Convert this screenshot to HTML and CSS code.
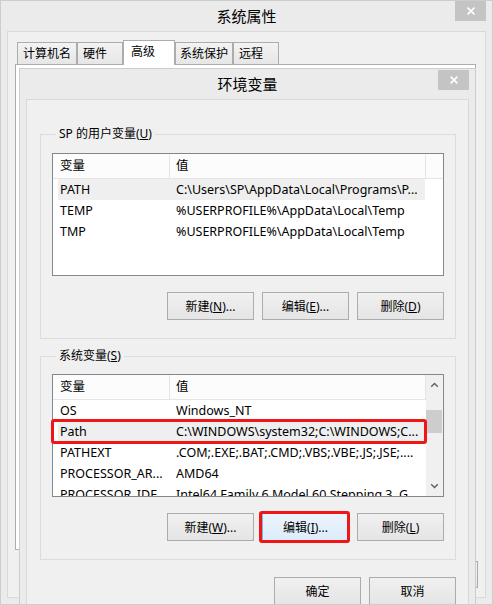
FILE: index.html
```html
<!DOCTYPE html>
<html lang="zh-CN">
<head>
<meta charset="utf-8">
<title>系统属性</title>
<link rel="stylesheet" href="styles.css">
</head>
<body>
<div class="win">
  <div class="titlebar">
    <div class="title">系统属性</div>
    <div class="close close-win">
      <svg width="8" height="8" viewBox="0 0 8 8"><path d="M0.6 0.6L7.4 7.4M7.4 0.6L0.6 7.4" stroke="#fff" stroke-width="1.6" fill="none"/></svg>
    </div>
  </div>
  <div class="win-client">
    <div class="tabs">
      <div class="tab">计算机名</div>
      <div class="tab">硬件</div>
      <div class="tab tab-sel">高级</div>
      <div class="tab tab-narrow">系统保护</div>
      <div class="tab">远程</div>
    </div>
    <div class="panel"></div>
    <div class="win-buttons">
      <button class="btn btn-short">确定</button>
      <button class="btn btn-short">取消</button>
      <button class="btn btn-short">应用(<u>A</u>)</button>
    </div>
  </div>

  <div class="env">
    <div class="titlebar">
      <div class="title">环境变量</div>
      <div class="close close-env">
        <svg width="8" height="8" viewBox="0 0 8 8"><path d="M0.6 0.6L7.4 7.4M7.4 0.6L0.6 7.4" stroke="#fff" stroke-width="1.6" fill="none"/></svg>
      </div>
    </div>
    <div class="env-client">
      <div class="group">
        <div class="legend">SP 的用户变量(<u>U</u>)</div>
        <div class="list list-user">
          <div class="list-head">
            <div class="h-name">变量</div>
            <div class="h-val">值</div>
          </div>
          <div class="rows">
            <div class="row row-sel"><div class="r-name">PATH</div><div class="r-val">C:\Users\SP\AppData\Local\Programs\P...</div></div>
            <div class="row"><div class="r-name">TEMP</div><div class="r-val">%USERPROFILE%\AppData\Local\Temp</div></div>
            <div class="row"><div class="r-name">TMP</div><div class="r-val">%USERPROFILE%\AppData\Local\Temp</div></div>
          </div>
        </div>
        <div class="btn-row">
          <button class="btn">新建(<u>N</u>)...</button>
          <button class="btn">编辑(<u>E</u>)...</button>
          <button class="btn">删除(<u>D</u>)</button>
        </div>
      </div>

      <div class="group group-sys">
        <div class="legend">系统变量(<u>S</u>)</div>
        <div class="list list-sys">
          <div class="list-main">
            <div class="list-head">
              <div class="h-name">变量</div>
              <div class="h-val">值</div>
            </div>
            <div class="rows">
              <div class="row"><div class="r-name">OS</div><div class="r-val">Windows_NT</div></div>
              <div class="row row-sel row-marked"><div class="r-name">Path</div><div class="r-val">C:\WINDOWS\system32;C:\WINDOWS;C...</div></div>
              <div class="row"><div class="r-name">PATHEXT</div><div class="r-val">.COM;.EXE;.BAT;.CMD;.VBS;.VBE;.JS;.JSE;....</div></div>
              <div class="row"><div class="r-name">PROCESSOR_AR...</div><div class="r-val">AMD64</div></div>
              <div class="row"><div class="r-name">PROCESSOR_IDE...</div><div class="r-val">Intel64 Family 6 Model 60 Stepping 3, G...</div></div>
            </div>
          </div>
          <div class="sb">
            <div class="sb-btn sb-up">
              <svg width="9" height="6" viewBox="0 0 9 6"><path d="M1.2 4.8L4.5 1.5L7.8 4.8" stroke="#606060" stroke-width="1.4" fill="none"/></svg>
            </div>
            <div class="sb-track"><div class="sb-thumb"></div></div>
            <div class="sb-btn sb-down">
              <svg width="9" height="6" viewBox="0 0 9 6"><path d="M1.2 1.2L4.5 4.5L7.8 1.2" stroke="#606060" stroke-width="1.4" fill="none"/></svg>
            </div>
          </div>
        </div>
        <div class="btn-row">
          <button class="btn">新建(<u>W</u>)...</button>
          <button class="btn btn-focus btn-marked">编辑(<u>I</u>)...</button>
          <button class="btn">删除(<u>L</u>)</button>
        </div>
      </div>

      <div class="env-buttons">
        <button class="btn">确定</button>
        <button class="btn">取消</button>
      </div>
    </div>
  </div>
</div>
</body>
</html>
```
FILE: styles.css
```css
* { box-sizing: border-box; }
html, body { margin: 0; padding: 0; }
body {
  width: 493px;
  height: 605px;
  overflow: hidden;
  font-family: "Noto Sans", "Noto Sans CJK SC", sans-serif;
  font-size: 12px;
  color: #000;
  background: #ebebeb;
}

.win {
  position: relative;
  width: 493px;
  height: 605px;
  border: 1px solid #cdcdcd;
  background: #ebebeb;
  display: flex;
  flex-direction: column;
  overflow: hidden;
}

.titlebar {
  display: grid;
  grid-template-columns: 1fr auto 1fr;
  height: 30px;
  flex: none;
}
.title {
  grid-column: 2;
  font-size: 15px;
  line-height: 30px;
  white-space: nowrap;
}
.close {
  grid-column: 3;
  justify-self: end;
  align-self: start;
  width: 31px;
  height: 20px;
  margin-right: 6px;
  background: #c4c4c4;
  display: flex;
  align-items: center;
  justify-content: center;
}
.close-env { margin-top: 1px; }

.win-client {
  flex: 1;
  margin: 0 6px 6px 6px;
  border: 1px solid #d9d9d9;
  background: #f0f0f0;
  display: flex;
  flex-direction: column;
}

.tabs {
  display: flex;
  align-items: flex-end;
  height: 24px;
  margin: 8px 0 0 9px;
  flex: none;
}
.tab {
  height: 22px;
  min-width: 46px;
  padding: 0 5px;
  border: 1px solid #acacac;
  border-bottom: none;
  background: linear-gradient(#f3f3f3, #e6e6e6);
  line-height: 21px;
  white-space: nowrap;
}
.tab-narrow { padding: 0 4px; }
.tab-sel {
  position: relative;
  z-index: 1;
  height: 25px;
  min-width: 52px;
  margin-bottom: -1px;
  padding-left: 7px;
  background: #fff;
  line-height: 21px;
}

.panel {
  flex: 1;
  margin: 0 9px 0 7px;
  border: 1px solid #adadad;
  background: #fff;
}

.win-buttons {
  display: flex;
  justify-content: flex-end;
  gap: 7px;
  margin: 11px 7px 9px 0;
  flex: none;
}

/* environment dialog, lying over the system properties window */
.env {
  position: absolute;
  left: 18px;
  top: 67px;
  width: 457px;
  height: 560px;
  border: 1px solid #cdcdcd;
  background: #ebebeb;
  display: flex;
  flex-direction: column;
  z-index: 2;
}
.env-client {
  flex: 1;
  margin: 0 6px;
  border: 1px solid #d9d9d9;
  border-bottom: none;
  background: #f0f0f0;
  display: flex;
  flex-direction: column;
  padding: 34px 12px 0 13px;
}

.group {
  display: flex;
  flex-direction: column;
  border: 1px solid #dcdcdc;
  padding: 0 11px 18px 11px;
}
.group-sys { margin-top: 17px; }
.legend {
  align-self: flex-start;
  height: 16px;
  line-height: 16px;
  margin: -9px 0 0 4px;
  padding: 0 3px;
  background: #f0f0f0;
  white-space: nowrap;
}

.list {
  height: 123px;
  margin-top: 11px;
  border: 1px solid #828790;
  background: #fff;
  font-size: 12.5px;
}
.group-sys .list { margin-top: 10px; }
.list-user {
  display: flex;
  flex-direction: column;
}
.list-sys {
  display: grid;
  grid-template-columns: 1fr 17px;
}
.list-main {
  display: flex;
  flex-direction: column;
  min-height: 0;
  min-width: 0;
}

.list-head {
  display: flex;
  height: 25px;
  flex: none;
  border-bottom: 1px solid #e5e5e5;
  background: #fcfcfd;
  line-height: 23px;
}
.h-name {
  width: 117px;
  padding-left: 7px;
  border-right: 1px solid #e5e5e5;
}
.h-val {
  width: 256px;
  padding-left: 6px;
  border-right: 1px solid #e5e5e5;
}

.rows {
  flex: 1;
  min-height: 0;
  overflow-x: visible;
  overflow-y: clip;
}
.row {
  display: flex;
  width: 367px;
  height: 21px;
  margin-left: 5px;
  line-height: 21px;
  white-space: nowrap;
}
.row-sel { background: #efefef; }
.row-marked { position: relative; }
.row-marked::after {
  content: "";
  position: absolute;
  left: -7px;
  right: -2px;
  top: -2px;
  bottom: -2px;
  border: 3px solid #f01616;
  border-radius: 3px;
}
.r-name {
  width: 112px;
  padding-left: 2px;
  overflow: hidden;
}
.r-val {
  width: 255px;
  padding-left: 6px;
  overflow: hidden;
}

.sb {
  display: flex;
  flex-direction: column;
  background: #f0f0f0;
}
.sb-btn {
  height: 20px;
  flex: none;
  display: flex;
  align-items: center;
  justify-content: center;
}
.sb-track { flex: 1; }
.sb-thumb {
  height: 23px;
  margin: 15px 1px 0 0;
  background: #cdcdcd;
}

.btn-row {
  display: flex;
  justify-content: flex-end;
  gap: 8px;
  margin-top: 16px;
}
.btn {
  width: 87px;
  height: 28px;
  padding: 0;
  border: 1px solid #acacac;
  background: linear-gradient(#f0f0f0, #e5e5e5);
  font-family: inherit;
  font-size: 12px;
  color: #000;
  white-space: nowrap;
}
.btn-short { height: 27px; }
.btn-focus {
  border-color: #7eb4ea;
  background: linear-gradient(#ecf4fc, #dcecfc);
}
.btn-marked { position: relative; }
.btn-marked::after {
  content: "";
  position: absolute;
  left: -4px;
  right: -2px;
  top: -3px;
  bottom: -3px;
  border: 3px solid #f01616;
  border-radius: 3px;
}

.env-buttons {
  display: flex;
  justify-content: flex-end;
  gap: 8px;
  margin-top: 17px;
}
```
